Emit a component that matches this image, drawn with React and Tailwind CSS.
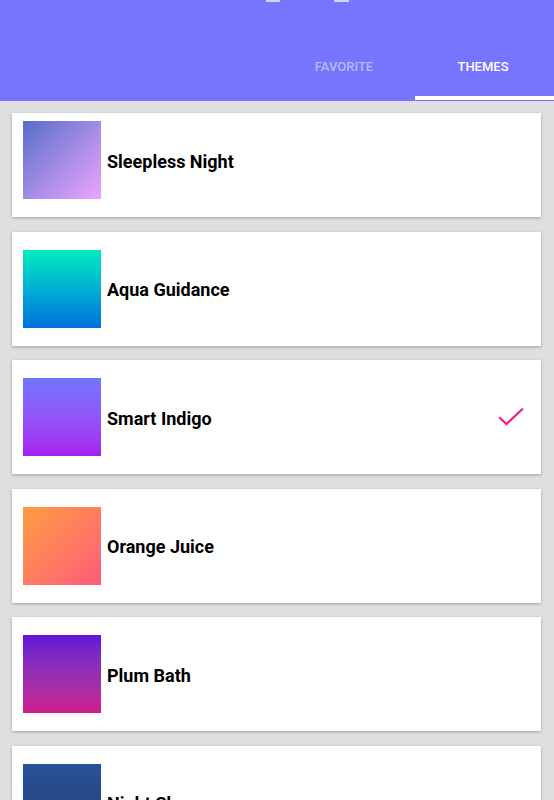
import { useState } from "react";

const themes = [
  { name: "Sleepless Night", swatch: "bg-gradient-to-br from-[#566dc8] to-[#eca5ff]" },
  { name: "Aqua Guidance", swatch: "bg-gradient-to-b from-[#00ebbd] to-[#006fdd]" },
  { name: "Smart Indigo", swatch: "bg-gradient-to-b from-[#7076ff] to-[#a61cf0]" },
  { name: "Orange Juice", swatch: "bg-gradient-to-br from-[#ff9b3c] to-[#ff5a76]" },
  { name: "Plum Bath", swatch: "bg-gradient-to-b from-[#6211d8] to-[#ce1b8a]" },
  { name: "Night Sky", swatch: "bg-gradient-to-b from-[#2b5399] to-[#1e3c72]" },
];

function CheckMark() {
  return (
    <svg width="26" height="20" viewBox="0 0 26 20" className="mr-[17px] mt-[2px]">
      <polyline
        points="2,10 8.5,16 24,1.5"
        fill="none"
        stroke="#ec1a8f"
        strokeWidth="2.2"
        strokeLinecap="square"
      />
    </svg>
  );
}

function ThemeCard({ theme, first, selected, onPick }) {
  return (
    <div
      onClick={onPick}
      className={
        "ml-3 mr-[13px] flex shrink-0 items-center bg-white pl-[11px] shadow-[0_1px_3px_rgba(0,0,0,0.28)] " +
        (first ? "h-[104px] pt-0 pb-[10px]" : "h-[114px]")
      }
    >
      <div className={"h-[78px] w-[78px] shrink-0 " + theme.swatch} />
      <span className="ml-[6px] mt-[3px] flex-1 text-[18px] font-bold leading-[22px] text-black">
        {theme.name}
      </span>
      {selected && <CheckMark />}
    </div>
  );
}

export default function App() {
  const [tab, setTab] = useState("themes");
  const [picked, setPicked] = useState("Smart Indigo");

  return (
    <div
      className="flex h-[800px] w-[554px] flex-col overflow-hidden bg-[#dfdfdf]"
      style={{ fontFamily: "Roboto, 'Liberation Sans', sans-serif" }}
    >
      {/* top bar */}
      <div className="h-[101px] shrink-0 bg-[#7775fe]">
        <div className="flex h-[2px]">
          <div className="ml-[266px] w-[14px] bg-[#d4d3fb]" />
          <div className="ml-[54px] w-[15px] bg-[#d4d3fb]" />
        </div>
        <div className="mt-[58px] flex justify-end">
          {["favorite", "themes"].map((t) => (
            <button
              key={t}
              onClick={() => setTab(t)}
              className="flex w-[139px] flex-col items-center"
            >
              <span
                className={
                  "pr-[3px] text-[13px] font-medium uppercase leading-[13px] " +
                  (tab === t ? "text-white" : "text-[#b9b8fb]")
                }
              >
                {t}
              </span>
              <span
                className={
                  "mt-[23px] h-[4px] w-full " + (tab === t ? "bg-white" : "bg-transparent")
                }
              />
            </button>
          ))}
        </div>
      </div>

      {/* theme list */}
      <div className="mt-3 flex flex-col gap-[14.5px]">
        {themes.map((th, i) => (
          <ThemeCard
            key={th.name}
            theme={th}
            first={i === 0}
            selected={picked === th.name}
            onPick={() => setPicked(th.name)}
          />
        ))}
      </div>
    </div>
  );
}
